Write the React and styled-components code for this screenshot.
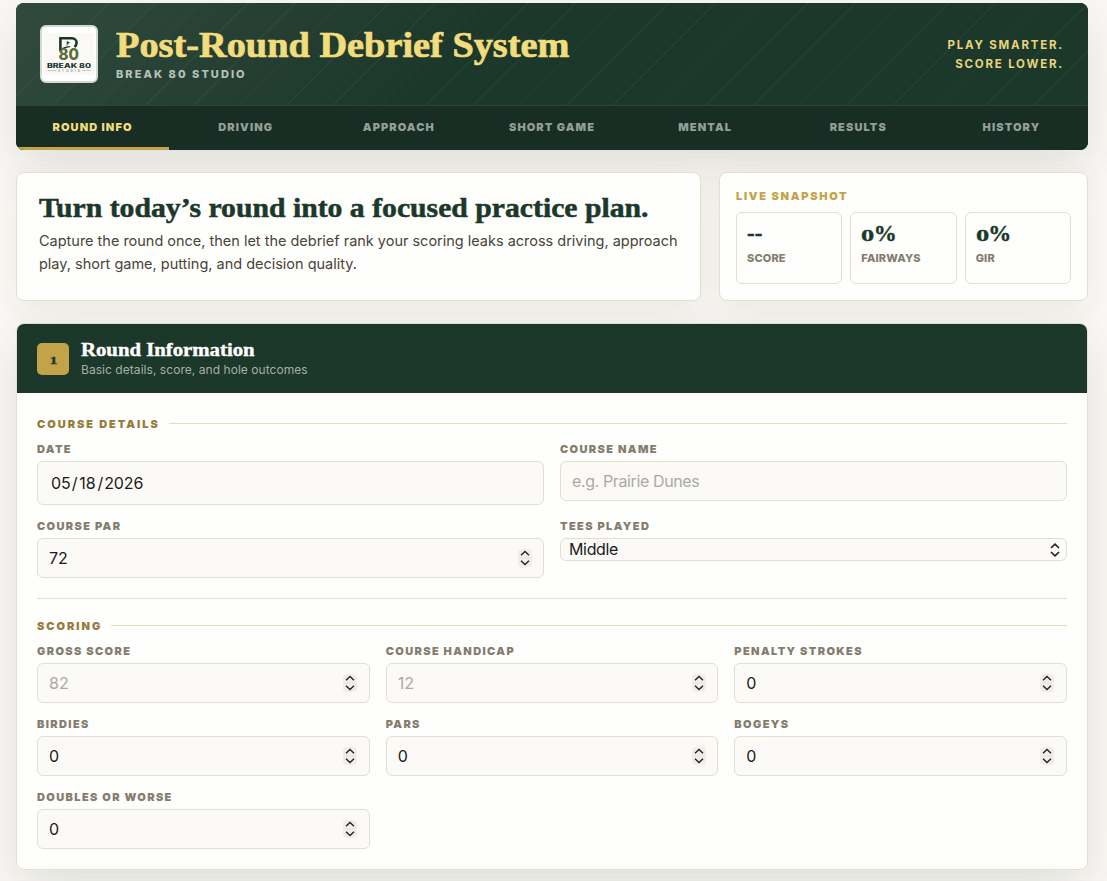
import React from 'react'
import styled, { createGlobalStyle } from 'styled-components'

const GlobalStyle = createGlobalStyle`
	* {
		box-sizing: border-box;
	}
	body {
		margin: 0;
		min-height: 881px;
		overflow: hidden;
		background: repeating-linear-gradient(0deg, rgba(28, 56, 41, 0.006) 0 1px, transparent 1px 4px), #fbf9f5;
		color: #1a1a1a;
		font-family: Inter, 'Liberation Sans', sans-serif;
	}
`

const Page = styled.div`
	width: 1072px;
	height: 881px;
	margin-left: 16px;
	padding-top: 3px;
`

const Header = styled.header`
	height: 147px;
	border-radius: 8px;
	overflow: hidden;
	background: #1c382a;
	box-shadow: 0 18px 50px rgba(23, 44, 35, 0.12);
`

const Brand = styled.div`
	height: 102px;
	padding: 0 24px;
	display: flex;
	align-items: center;
	background: repeating-linear-gradient(135deg, transparent 0 32px, rgba(255, 255, 255, 0.04) 32px 33px),
		linear-gradient(135deg, rgba(255, 255, 255, 0.09), transparent 42%), #1c382a;
`

const LogoBox = styled.div`
	width: 58px;
	height: 58px;
	border: 2px solid #d3d8d4;
	border-radius: 6px;
	background: #fff;
	svg {
		display: block;
	}
`

const BrandText = styled.div`
	flex: 1;
	margin-left: 18px;
`

const Serif = styled.span`
	display: inline-block;
	font-family: Georgia, 'Liberation Serif', serif;
	font-weight: bold;
	white-space: nowrap;
	-webkit-text-stroke: ${p => p.$stroke || 0.4}px currentColor;
	transform: scaleX(${p => p.$stretch || 1});
	transform-origin: left;
`

const Title = styled.h1`
	margin: -4px 0 0;
	height: 40px;
	font-size: 35px;
	line-height: 40px;
	color: #f2dc7c;
`

const Studio = styled.p`
	margin: 3px 0 0;
	font-size: 11px;
	line-height: 14px;
	font-weight: 800;
	letter-spacing: 2.05px;
	color: #b7c0b9;
`

const Tagline = styled.p`
	margin: 2px 0 0;
	text-align: right;
	font-size: 11.5px;
	line-height: 19px;
	font-weight: 700;
	letter-spacing: 1.8px;
	color: #e8d47c;
`

const Nav = styled.nav`
	display: grid;
	grid-template-columns: repeat(7, 1fr);
	height: 45px;
	border-top: 1px solid #2b4637;
	background: #182d23;
`

const Tab = styled.button`
	padding: 0;
	border: 0;
	border-bottom: 3px solid ${p => (p.$active ? '#c3a349' : 'transparent')};
	background: none;
	font-family: inherit;
	font-size: 11px;
	font-weight: 900;
	letter-spacing: 1.1px;
	color: ${p => (p.$active ? '#f2dc7c' : '#949f98')};
`

const Intro = styled.div`
	display: grid;
	grid-template-columns: 685px 369px;
	gap: 18px;
	height: 129px;
	margin-top: 22px;
`

const Card = styled.section`
	border: 1px solid #e4dfcf;
	border-radius: 8px;
	background: #fefefc;
	box-shadow: 0 12px 34px rgba(23, 44, 35, 0.07);
`

const Hero = styled(Card)`
	padding: 18px 22px;
`

const HeroTitle = styled.h2`
	margin: 0;
	height: 32px;
	font-size: 27px;
	line-height: 33px;
	color: #1c382a;
`

const HeroText = styled.p`
	margin: 6px 0 0;
	font-size: 14.5px;
	line-height: 23px;
	letter-spacing: -0.01px;
	color: #4a4439;
	white-space: nowrap;
`

const Snapshot = styled(Card)`
	padding: 16px;
`

const Eyebrow = styled.h3`
	margin: 0;
	font-size: 11px;
	line-height: 14px;
	font-weight: 900;
	letter-spacing: 1.7px;
	color: #c3a349;
`

const Stats = styled.div`
	display: grid;
	grid-template-columns: repeat(3, 1fr);
	gap: 8px;
	height: 72px;
	margin-top: 9px;
`

const Stat = styled.div`
	padding: 7px 10px;
	border: 1px solid #e4dfcf;
	border-radius: 6px;
`

const StatValue = styled.div`
	height: 26px;
	font-size: 23px;
	line-height: 26px;
	color: #1c382a;
`

// old-style figure, sits at x-height
const Figure = styled.span`
	display: inline-block;
	transform: scale(1.15, 0.75);
	transform-origin: left 20px;
	margin-right: 1px;
`

const StatLabel = styled.div`
	margin-top: 5px;
	font-size: 11px;
	line-height: 14px;
	font-weight: 800;
	letter-spacing: 0.15px;
	color: #847d6e;
`

const Panel = styled(Card)`
	height: 547px;
	margin-top: 22px;
	overflow: hidden;
	box-shadow: 0 18px 50px rgba(23, 44, 35, 0.12);
`

const PanelHead = styled.div`
	display: flex;
	align-items: center;
	height: 69px;
	padding: 0 20px;
	background: #1c382a;
`

const Step = styled.div`
	width: 32px;
	height: 32px;
	margin-right: 12px;
	border-radius: 5px;
	background: #c3a349;
	color: #1c382a;
	font-size: 14px;
	line-height: 32px;
	text-align: center;
`

// old-style one: shorter and wider than the lining figure
const StepNumber = styled.span`
	display: inline-block;
	transform: scale(1.15, 0.8);
	transform-origin: center 20px;
`

const PanelTitle = styled.h2`
	margin: -2px 0 0;
	height: 21px;
	font-size: 18px;
	line-height: 21px;
	color: #fff;
`

const PanelSub = styled.p`
	margin: 2px 0 0;
	font-size: 12px;
	line-height: 15px;
	letter-spacing: 0.05px;
	color: #a4afa8;
`

const PanelBody = styled.div`
	padding: 24px 20px 20px;
`

const GroupTitle = styled.h3`
	display: flex;
	align-items: center;
	gap: 9px;
	height: 13px;
	margin: 0 0 12px;
	font-size: 11px;
	line-height: 13px;
	font-weight: 900;
	letter-spacing: 1.98px;
	color: #967a39;
	span {
		padding-top: 1px;
	}
	&::after {
		content: '';
		flex: 1;
		height: 1px;
		background: #e6deba;
	}
`

const Fields = styled.div`
	display: grid;
	grid-template-columns: repeat(${p => p.$cols}, 1fr);
	gap: 14px 16px;
	align-items: start;
`

const Field = styled.label`
	display: block;
`

const Label = styled.span`
	display: block;
	padding-top: 1px;
	margin-bottom: 5px;
	font-size: 11px;
	line-height: 13px;
	font-weight: 900;
	letter-spacing: 1.38px;
	color: #847d6e;
`

const Control = styled.span`
	display: flex;
	align-items: center;
	height: ${p => p.$height || 40}px;
	padding: 0 ${p => p.$right || 11}px 0 ${p => p.$left || 11}px;
	border: 1px solid #e1dfd0;
	border-radius: 6px;
	background: #fbfaf7;
	font-size: 16px;
	color: #1a1a1a;
`

const Input = styled.input`
	flex: 1;
	min-width: 0;
	padding: 0;
	border: 0;
	outline: 0;
	background: none;
	font: inherit;
	letter-spacing: ${p => p.$tracking || 0}px;
	color: inherit;
	&::placeholder {
		color: #aaa9a7;
		opacity: 1;
	}
`

const DatePart = styled.span`
	padding-right: ${p => p.$gap || 0}px;
	letter-spacing: -0.1px;
`

const SelectValue = styled.span`
	flex: 1;
	margin-top: -2px;
	letter-spacing: -0.35px;
`

const Divider = styled.hr`
	height: 1px;
	margin: 20px 0;
	border: 0;
	background: #e1dfd0;
`

const tabs = ['ROUND INFO', 'DRIVING', 'APPROACH', 'SHORT GAME', 'MENTAL', 'RESULTS', 'HISTORY']

const stats = [
	{ value: '--', label: 'SCORE' },
	{ value: '0', unit: '%', label: 'FAIRWAYS' },
	{ value: '0', unit: '%', label: 'GIR' },
]

const scoring = [
	{ label: 'GROSS SCORE', placeholder: '82' },
	{ label: 'COURSE HANDICAP', placeholder: '12' },
	{ label: 'PENALTY STROKES', value: '0' },
	{ label: 'BIRDIES', value: '0' },
	{ label: 'PARS', value: '0' },
	{ label: 'BOGEYS', value: '0' },
	{ label: 'DOUBLES OR WORSE', value: '0' },
]

function Logo() {
	return (
		<LogoBox>
			<svg width="54" height="54" viewBox="0 0 54 54" fontFamily="Inter, sans-serif">
				<rect x="2" y="6" width="50" height="42" fill="#faf9f6" />
				<path
					d="M18.400 23V11.200h11.600a4.600 4.600 0 0 1 4.600 4.600q0 2.600-2.200 4"
					fill="none"
					stroke="#18352c"
					strokeWidth="2.600"
				/>
				<path d="M17.200 24c2.500-3.500 5.500-3.500 11-4.500" fill="none" stroke="#18352c" strokeWidth="1.200" />
				<path d="M25 19v-4.500l2.500 1.300-2.500 1.300" fill="#18352c" stroke="#18352c" strokeWidth="0.600" />
				<text
					x="16.500"
					y="33.400"
					fontSize="16.500"
					fontWeight="800"
					fill="#5c6d38"
					textLength="20.500"
					lengthAdjust="spacingAndGlyphs"
				>
					80
				</text>
				<text
					x="5"
					y="40.500"
					fontSize="5.800"
					fontWeight="800"
					fill="#18352c"
					textLength="44"
					lengthAdjust="spacingAndGlyphs"
				>
					BREAK 80
				</text>
				<text x="16" y="44.800" fontSize="3" fontWeight="600" fill="#8b9272" textLength="22">
					STUDIO
				</text>
				<path d="M5.500 43.500h9M40 43.500h9" stroke="#b4b7a0" strokeWidth="0.700" />
			</svg>
		</LogoBox>
	)
}

function Stepper() {
	return (
		<svg width="14" height="18" viewBox="0 0 14 18" fill="none">
			<rect width="14" height="18" rx="4" fill="#efeeeb" />
			<path d="M2 9h10" stroke="#e4e3df" />
			<path d="M3 6.200L7 2.500l4 3.700M3 11.800L7 15.500l4-3.700" stroke="#222" strokeWidth="1.400" />
		</svg>
	)
}

function SelectArrows() {
	return (
		<svg width="10" height="14" viewBox="0 0 10 14" fill="none">
			<path d="M1 5L5 1.200 9 5M1 9l4 3.800L9 9" stroke="#222" strokeWidth="1.700" />
		</svg>
	)
}

function NumberField({ label, value, placeholder }) {
	return (
		<Field>
			<Label>{label}</Label>
			<Control $right={11.5}>
				<Input inputMode="numeric" defaultValue={value} placeholder={placeholder} />
				<Stepper />
			</Control>
		</Field>
	)
}

function App() {
	return (
		<Page>
			<GlobalStyle />
			<Header>
				<Brand>
					<Logo />
					<BrandText>
						<Title>
							<Serif $stretch={1.095} $stroke={0.7}>
								Post-Round Debrief System
							</Serif>
						</Title>
						<Studio>BREAK 80 STUDIO</Studio>
					</BrandText>
					<Tagline>
						PLAY SMARTER.
						<br />
						SCORE LOWER.
					</Tagline>
				</Brand>
				<Nav>
					{tabs.map((tab, i) => (
						<Tab key={tab} $active={i === 0}>
							{tab}
						</Tab>
					))}
				</Nav>
			</Header>

			<Intro>
				<Hero>
					<HeroTitle>
						<Serif $stretch={1.1} $stroke={0.5}>
							Turn today’s round into a focused practice plan.
						</Serif>
					</HeroTitle>
					<HeroText>
						Capture the round once, then let the debrief rank your scoring leaks across driving, approach
						<br />
						play, short game, putting, and decision quality.
					</HeroText>
				</Hero>
				<Snapshot>
					<Eyebrow>LIVE SNAPSHOT</Eyebrow>
					<Stats>
						{stats.map(({ value, unit, label }) => (
							<Stat key={label}>
								<StatValue>
									<Serif>
										{unit ? <Figure>{value}</Figure> : value}
										{unit}
									</Serif>
								</StatValue>
								<StatLabel>{label}</StatLabel>
							</Stat>
						))}
					</Stats>
				</Snapshot>
			</Intro>

			<Panel>
				<PanelHead>
					<Step>
						<Serif>
							<StepNumber>1</StepNumber>
						</Serif>
					</Step>
					<div>
						<PanelTitle>
							<Serif $stretch={1.153}>Round Information</Serif>
						</PanelTitle>
						<PanelSub>Basic details, score, and hole outcomes</PanelSub>
					</div>
				</PanelHead>
				<PanelBody>
					<GroupTitle>
						<span>COURSE DETAILS</span>
					</GroupTitle>
					<Fields $cols={2}>
						<Field>
							<Label>DATE</Label>
							<Control $height={44} $left={13}>
								<DatePart $gap={1}>05</DatePart>
								<DatePart $gap={2}>/</DatePart>
								<DatePart $gap={2}>18</DatePart>
								<DatePart $gap={1}>/</DatePart>
								<DatePart>2026</DatePart>
							</Control>
						</Field>
						<Field>
							<Label>COURSE NAME</Label>
							<Control>
								<Input placeholder="e.g. Prairie Dunes" $tracking={-0.38} />
							</Control>
						</Field>
						<NumberField label="COURSE PAR" value="72" />
						<Field>
							<Label>TEES PLAYED</Label>
							<Control $height={23} $left={8} $right={6}>
								<SelectValue>Middle</SelectValue>
								<SelectArrows />
							</Control>
						</Field>
					</Fields>
					<Divider />
					<GroupTitle>
						<span>SCORING</span>
					</GroupTitle>
					<Fields $cols={3}>
						{scoring.map(field => (
							<NumberField key={field.label} {...field} />
						))}
					</Fields>
				</PanelBody>
			</Panel>
		</Page>
	)
}

export default App
